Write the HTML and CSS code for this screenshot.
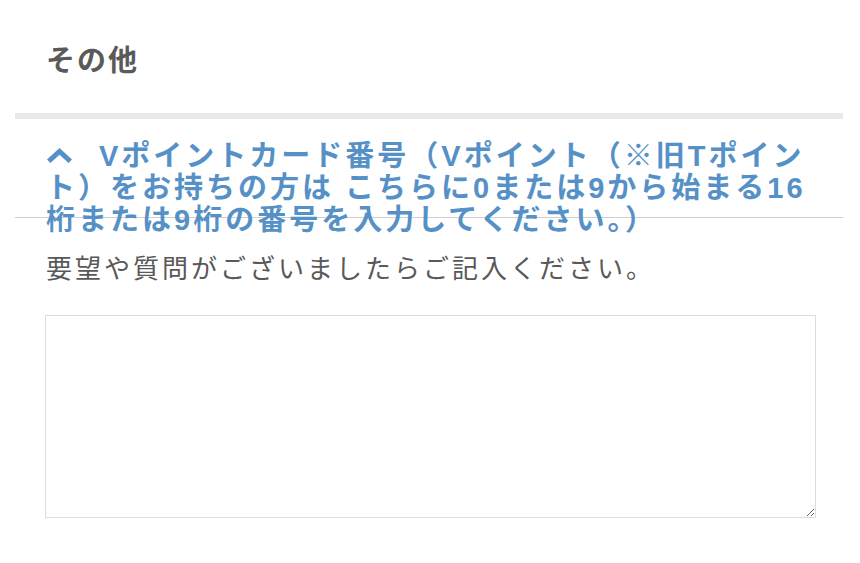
FILE: index.html
```html
<!DOCTYPE html>
<html lang="ja">
<head>
<meta charset="utf-8">
<link rel="stylesheet" href="styles.css">
</head>
<body>
<div class="page">
  <div class="section-title">その他</div>
  <div class="bar"></div>
  <div class="acc-head">
    <p class="acc-text"><svg class="chev" viewBox="0 0 25 15" width="25" height="15"><path d="M0 11.5 L12.5 0 L25 11.5 L21.5 15 L12.5 6.8 L3.5 15 Z" fill="#5591c6"/></svg>Vポイントカード番号（Vポイント（※旧Tポイント）をお持ちの方は こちらに0または9から始まる16桁または9桁の番号を入力してください。）</p>
  </div>
  <div class="acc-body">
    <p class="desc">要望や質問がございましたらご記入ください。</p>
    <textarea class="memo"></textarea>
  </div>
</div>
</body>
</html>
```
FILE: styles.css
```css
html, body {
  margin: 0;
  padding: 0;
  background: #fff;
}
.page {
  width: 828px;
  margin-left: 15px;
  font-family: "Liberation Sans", "Noto Sans CJK JP", sans-serif;
}
.section-title {
  height: 113px;
  box-sizing: border-box;
  padding: 38px 0 0 31px;
  font-family: "Noto Sans CJK JP", sans-serif;
  font-size: 29px;
  letter-spacing: 2px;
  line-height: 40px;
  font-weight: bold;
  color: #5a5a5a;
}
.bar {
  height: 6px;
  background: #e9e9ea;
}
.acc-head {
  height: 99px;
  box-sizing: border-box;
  border-bottom: 1px solid #cfcfcf;
  padding: 21px 20px 0 31px;
}
.acc-text {
  margin: 0;
  font-size: 29px;
  letter-spacing: 3px;
  line-height: 32px;
  font-weight: bold;
  color: #5591c6;
}
.chev {
  display: inline-block;
  margin: 0 27px 0 1px;
  vertical-align: 3px;
}
.acc-body {
  padding: 31px 28px 0 30px;
}
.desc {
  margin: 0;
  padding-left: 1px;
  font-size: 26px;
  letter-spacing: 3px;
  line-height: 40px;
  color: #595959;
}
.memo {
  display: block;
  box-sizing: border-box;
  width: 771px;
  height: 203px;
  margin-top: 26px;
  border: 1px solid #dcdcdc;
  border-radius: 0;
  background: #fff;
  padding: 8px;
  font-family: inherit;
}
```
